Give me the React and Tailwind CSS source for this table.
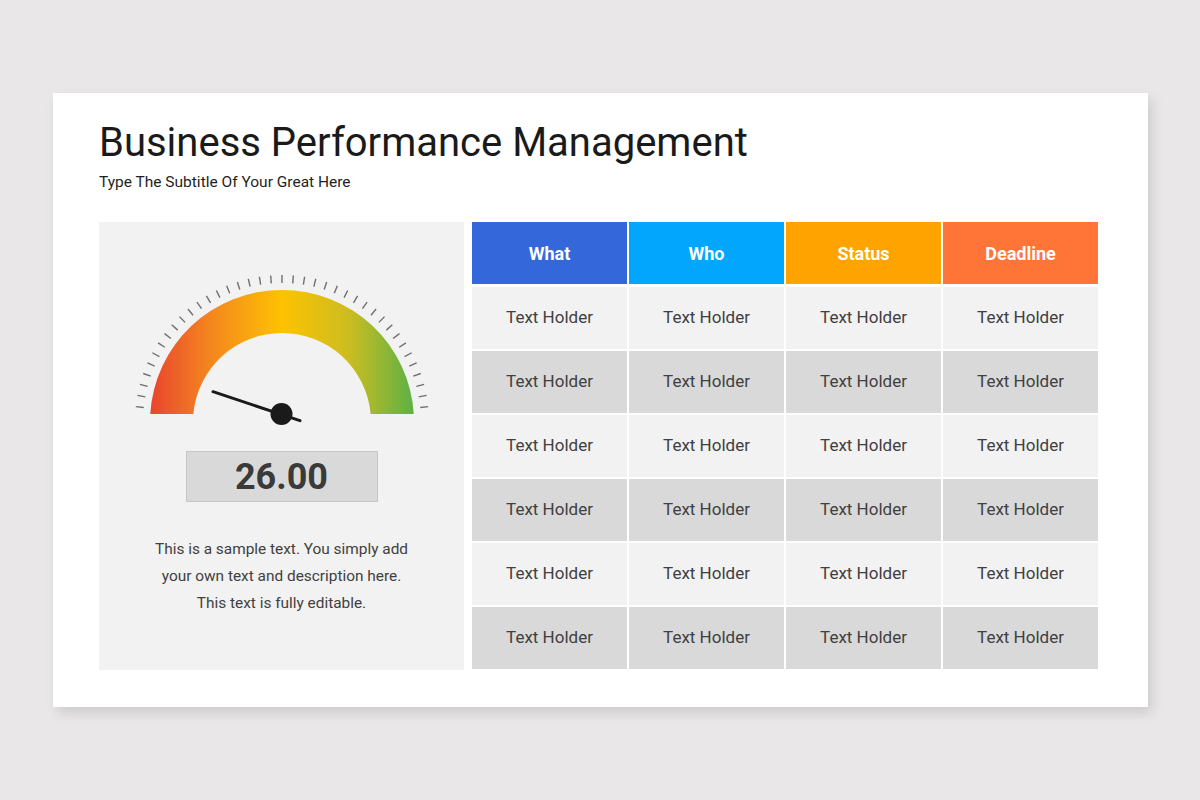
import React from "react";

// ---- data ----
const headers = [
  { label: "What", bg: "bg-[#3467da]" },
  { label: "Who", bg: "bg-[#03a6fd]" },
  { label: "Status", bg: "bg-[#ffa300]" },
  { label: "Deadline", bg: "bg-[#ff7538]" },
];

const rows = [0, 1, 2, 3, 4, 5];

function Gauge() {
  const cx = 150;
  const cy = 157;
  const ticks = [];
  const count = 39;
  for (let i = 0; i < count; i++) {
    const a = ((6 + (168 * i) / (count - 1)) * Math.PI) / 180;
    const r1 = 139;
    const r2 = 147;
    ticks.push(
      <line
        key={i}
        x1={cx - Math.cos(a) * r1}
        y1={cy - Math.sin(a) * r1}
        x2={cx - Math.cos(a) * r2}
        y2={cy - Math.sin(a) * r2}
        stroke="#6f6f6f"
        strokeWidth="1.4"
      />
    );
  }

  return (
    <svg width="300" height="165" viewBox="0 0 300 165">
      <defs>
        <linearGradient id="arcGrad" gradientUnits="userSpaceOnUse" x1="18" y1="0" x2="282" y2="0">
          <stop offset="0" stopColor="#e8452f" />
          <stop offset="0.22" stopColor="#f4841f" />
          <stop offset="0.5" stopColor="#fdc202" />
          <stop offset="0.75" stopColor="#cdbd20" />
          <stop offset="1" stopColor="#5cb146" />
        </linearGradient>
      </defs>
      {ticks}
      <path
        d="M 18.24 149 A 132 132 0 0 1 281.76 149 L 238.64 149 A 89 89 0 0 0 61.36 149 Z"
        fill="url(#arcGrad)"
      />
      <line x1="81" y1="126.7" x2="168" y2="155.7" stroke="#1a1a1a" strokeWidth="3" strokeLinecap="round" />
      <circle cx="149.5" cy="149" r="11" fill="#1a1a1a" />
    </svg>
  );
}

export default function App() {
  return (
    <div
      className="w-[1200px] h-[800px] bg-[#e9e7e8] pt-[93px] pl-[53px]"
      style={{ fontFamily: "Roboto, 'Liberation Sans', sans-serif" }}
    >
      <div className="w-[1095px] h-[614px] bg-white shadow-[4px_6px_12px_rgba(0,0,0,0.12)] px-[46px] pt-[25px]">
        <h1 className="text-[40px] leading-[50px] text-[#1a1a1a]">
          Business Performance Management
        </h1>
        <p className="text-[15.5px] leading-[20px] text-[#1f1f1f] mt-[4px]">
          Type The Subtitle Of Your Great Here
        </p>

        <div className="flex gap-[8px] mt-[30px]">
          {/* left panel */}
          <div className="w-[365px] h-[448px] bg-[#f2f2f2] flex flex-col items-center pt-[43px]">
            <Gauge />
            <div className="mt-[21px] w-[192px] h-[51px] bg-[#d9d9d9] border border-[#c6c6c6] flex items-center justify-center">
              <span className="text-[36px] font-bold text-[#3a3a3a] leading-none">26.00</span>
            </div>
            <p className="mt-[34px] text-[15.4px] leading-[27px] text-[#404040] text-center">
              This is a sample text. You simply add
              <br />
              your own text and description here.
              <br />
              This text is fully editable.
            </p>
          </div>

          {/* table */}
          <div className="w-[626px] flex flex-col gap-[2px]">
            <div className="grid grid-cols-4 gap-[2px] h-[62px] mb-[1px]">
              {headers.map((h) => (
                <div
                  key={h.label}
                  className={`${h.bg} flex items-center justify-center text-white font-bold text-[18px]`}
                >
                  {h.label}
                </div>
              ))}
            </div>
            {rows.map((r) => (
              <div key={r} className="grid grid-cols-4 gap-[2px] h-[62px]">
                {headers.map((h) => (
                  <div
                    key={h.label}
                    className={`${r % 2 === 0 ? "bg-[#f2f2f2]" : "bg-[#d9d9d9]"} flex items-center justify-center text-[17px] text-[#404040]`}
                  >
                    Text Holder
                  </div>
                ))}
              </div>
            ))}
          </div>
        </div>
      </div>
    </div>
  );
}
